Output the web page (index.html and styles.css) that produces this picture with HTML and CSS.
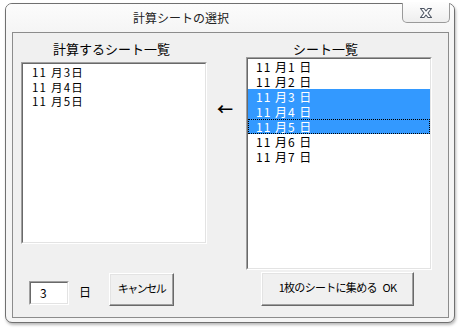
FILE: index.html
```html
<!DOCTYPE html>
<html lang="ja">
<head>
<meta charset="utf-8">
<title>計算シートの選択</title>
<link rel="stylesheet" href="styles.css">
</head>
<body>
<div class="window">
  <div class="titlebar">
    <span class="title">計算シートの選択</span>
    <div class="close">
      <svg width="16" height="12" viewBox="0 0 16 12">
        <path d="M2.5 1.5 H6 L8 4 L10 1.5 H13.5 L10 6 L13.5 10.5 H10 L8 8 L6 10.5 H2.5 L6 6 Z" fill="#ffffff" stroke="#4d5563" stroke-width="1.1" stroke-linejoin="round"/>
      </svg>
    </div>
  </div>
  <div class="client">
    <div class="col-left">
      <div class="label label-left">計算するシート一覧</div>
      <div class="list list-left">
        <div class="list-inner">
          <div class="item">11 月3日</div>
          <div class="item">11 月4日</div>
          <div class="item">11 月5日</div>
        </div>
      </div>
      <div class="bottom-row">
        <div class="daybox"><div class="daybox-inner">3</div></div>
        <span class="day">日</span>
        <div class="btn btn-cancel"><span>キャンセル</span></div>
      </div>
    </div>
    <div class="col-mid">
      <div class="arrow">←</div>
    </div>
    <div class="col-right">
      <div class="label label-right">シート一覧</div>
      <div class="list list-right">
        <div class="list-inner">
          <div class="row">11 月1 日</div>
          <div class="row">11 月2 日</div>
          <div class="row sel">11 月3 日</div>
          <div class="row sel">11 月4 日</div>
          <div class="row sel focus">11 月5 日</div>
          <div class="row">11 月6 日</div>
          <div class="row">11 月7 日</div>
        </div>
      </div>
      <div class="btn btn-ok"><span>1枚のシートに集める OK</span></div>
    </div>
  </div>
</div>
</body>
</html>
```

FILE: styles.css
```css
html, body {
  margin: 0;
  padding: 0;
  background: #ffffff;
}
body {
  width: 463px;
  height: 334px;
  overflow: hidden;
  font-family: "Noto Sans CJK JP", "Noto Sans", sans-serif;
  color: #000;
}
.window {
  box-sizing: border-box;
  margin: 3px 0 0 5px;
  width: 450px;
  height: 320px;
  border: 1px solid #707070;
  border-radius: 7px;
  background: #f5f5f5;
  box-shadow: 1px 2px 3px rgba(0, 0, 0, 0.28);
  display: flex;
  flex-direction: column;
}
.titlebar {
  height: 28px;
  display: flex;
  align-items: flex-start;
  background: linear-gradient(#fcfcfc, #f5f5f5);
  border-radius: 6px 6px 0 0;
}
.title {
  padding-left: 127px;
  font-size: 12px;
  line-height: 28px;
  color: #222;
}
.close {
  box-sizing: border-box;
  margin: -1px 4px 0 auto;
  width: 48px;
  height: 20px;
  border: 1px solid #9a9a9a;
  border-top: none;
  border-radius: 0 0 5px 5px;
  background: linear-gradient(#fdfdfd, #eeeeee);
  display: flex;
  align-items: center;
  justify-content: center;
}
.client {
  box-sizing: border-box;
  margin: 0 5px 0 6px;
  height: 286px;
  border: 1px solid #8c8c8c;
  background: #f0f0f0;
  display: flex;
  padding-left: 8px;
}
.col-left {
  width: 186px;
  display: flex;
  flex-direction: column;
}
.col-mid {
  width: 39px;
  padding-left: 10px;
  box-sizing: border-box;
}
.col-right {
  width: 190px;
  display: flex;
  flex-direction: column;
}
.label {
  padding-top: 8px;
  font-size: 13px;
  line-height: 16px;
  white-space: nowrap;
}
.label-left {
  padding-left: 32px;
  margin-bottom: 5px;
}
.label-right {
  padding-left: 47px;
}
.list {
  box-sizing: border-box;
  border: 1px solid;
  border-color: #a0a0a0 #ffffff #ffffff #a0a0a0;
}
.list-inner {
  box-sizing: border-box;
  height: 100%;
  border: 1px solid;
  border-color: #696969 #e3e3e3 #e3e3e3 #696969;
  background: #ffffff;
}
.list-left {
  width: 186px;
  height: 182px;
}
.list-left .list-inner {
  padding: 1px 0 0 9px;
}
.item {
  font-size: 11.5px;
  line-height: 14.5px;
  letter-spacing: 1.2px;
  white-space: nowrap;
}
.list-right {
  width: 186px;
  height: 213px;
}
.list-right .list-inner {
  padding-top: 0;
}
.row {
  height: 15px;
  padding-left: 8px;
  font-size: 12px;
  line-height: 15px;
  letter-spacing: 1px;
  white-space: nowrap;
}
.row.sel {
  background: #3399ff;
  color: #ffffff;
}
.row.focus {
  outline: 1px dotted #000;
  outline-offset: -1px;
}
.arrow {
  margin-top: 65px;
  font-size: 16px;
  line-height: 20px;
  font-weight: bold;
}
.bottom-row {
  margin-top: 29px;
  display: flex;
  align-items: flex-start;
}
.daybox {
  box-sizing: border-box;
  margin: 8px 0 0 8px;
  width: 40px;
  height: 24px;
  border: 1px solid;
  border-color: #a0a0a0 #ffffff #ffffff #a0a0a0;
}
.daybox-inner {
  box-sizing: border-box;
  height: 100%;
  border: 1px solid;
  border-color: #696969 #e3e3e3 #e3e3e3 #696969;
  background: #ffffff;
  padding-left: 9px;
  font-size: 12px;
  line-height: 20px;
}
.day {
  margin: 11px 0 0 10px;
  font-size: 12px;
  line-height: 16px;
}
.btn {
  box-sizing: border-box;
  border: 1px solid;
  border-color: #ffffff #696969 #696969 #ffffff;
  box-shadow: inset -1px -1px 0 #a0a0a0, inset 1px 1px 0 #e3e3e3;
  background: #f0f0f0;
  display: flex;
  align-items: center;
  justify-content: center;
  white-space: nowrap;
}
.btn-cancel {
  margin-left: 18px;
  width: 65px;
  height: 33px;
  font-size: 11px;
  letter-spacing: -1.5px;
}
.btn-cancel span {
  margin-top: -3px;
}
.btn-ok {
  margin: 2px 0 0 15px;
  width: 153px;
  height: 34px;
  font-size: 11px;
  letter-spacing: -0.7px;
  word-spacing: 4px;
}
.btn-ok span {
  margin-top: -4px;
}
```
